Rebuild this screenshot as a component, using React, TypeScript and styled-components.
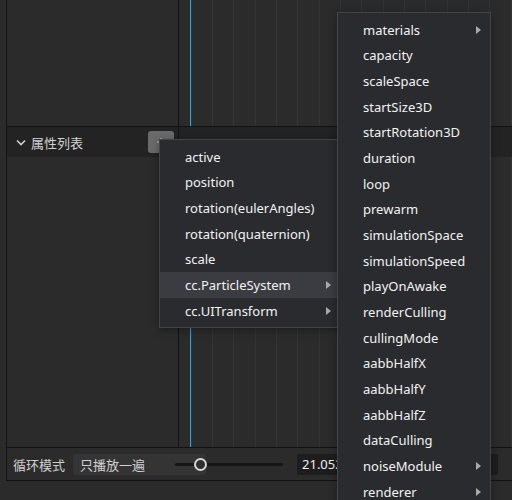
import React from "react";
import styled, { createGlobalStyle } from "styled-components";

const Global = createGlobalStyle`
  html, body { margin: 0; padding: 0; background: #2b2b2b; }
  body {
    font-family: "Noto Sans", "Noto Sans CJK SC", sans-serif;
    font-size: 13px;
    -webkit-font-smoothing: antialiased;
  }
  * { box-sizing: border-box; }
`;

const Page = styled.div`
  position: relative;
  width: 512px;
  height: 500px;
  overflow: hidden;
  background: #2b2b2b;
  padding-left: 6px;
`;

const Frame = styled.div`
  height: 481px;
  border-left: 1px solid #121212;
  border-bottom: 1px solid #121212;
  display: flex;
  flex-direction: column;
`;

const Panels = styled.div`
  display: grid;
  grid-template-columns: 171px 1fr;
  grid-template-rows: 126px 320px;
  gap: 1px;
  background: #121212;
  border-bottom: 1px solid #121212;
`;

const Cell = styled.div`
  background: #2b2b2b;
  display: flex;
  flex-direction: column;
  min-width: 0;
`;

const Timeline = styled.div`
  flex: 1;
  background-color: #2b2b2b;
  background-image:
    linear-gradient(#2aa8dc, #2aa8dc),
    repeating-linear-gradient(
      to right,
      transparent 0 11.7px,
      #323338 11.7px 12.7px,
      transparent 12.7px 21.33px
    );
  background-size: 1px 100%, 100% 100%;
  background-position: 11px 0, 0 0;
  background-repeat: no-repeat, no-repeat;
`;

const HeaderStrip = styled.div`
  height: 30px;
  flex: none;
  background: #232323;
  display: flex;
  align-items: center;
  padding: 0 4px 0 9px;
  color: #d2d2d2;
`;

const Title = styled.span`
  font-family: "Noto Sans CJK SC", sans-serif;
  font-size: 13px;
  margin-left: 5px;
  flex: 1;
`;

const AddButton = styled.div`
  width: 26px;
  height: 22px;
  border-radius: 3px;
  background: #6a6a6a;
  display: flex;
  align-items: center;
  justify-content: center;
`;

const Toolbar = styled.div`
  flex: 1;
  display: flex;
  align-items: center;
  padding-left: 6px;
  background: #2b2b2b;
`;

const Label = styled.span`
  font-family: "Noto Sans CJK SC", sans-serif;
  color: #cfcfcf;
  font-size: 13px;
  margin-right: 8px;
`;

const Select = styled.div`
  width: 133px;
  height: 21px;
  border-radius: 2px;
  background: #343434;
  color: #d0d0d0;
  font-family: "Noto Sans CJK SC", sans-serif;
  font-size: 13px;
  display: flex;
  align-items: center;
  padding-left: 7px;
`;

const Slider = styled.div`
  position: relative;
  width: 108px;
  height: 14px;
  margin-left: -31px;
  display: flex;
  align-items: center;
`;

const Track = styled.div`
  width: 100%;
  height: 3px;
  border-radius: 2px;
  background: #151515;
`;

const Thumb = styled.div`
  position: absolute;
  top: 50%;
  width: 13px;
  height: 13px;
  margin-top: -6.5px;
  margin-left: -6.5px;
  border-radius: 50%;
  border: 2px solid #d6d6d6;
  background: #2e2e2e;
`;

const NumberBox = styled.div`
  width: 201px;
  height: 21px;
  margin-left: 14px;
  border-radius: 2px;
  background: #1d1d1d;
  color: #efefef;
  font-size: 13px;
  display: flex;
  align-items: center;
  padding-left: 5px;
`;

const Menu = styled.div<{ $left: number; $top: number; $width: number; $z: number }>`
  position: absolute;
  left: ${(p) => p.$left}px;
  top: ${(p) => p.$top}px;
  width: ${(p) => p.$width}px;
  z-index: ${(p) => p.$z};
  background: #2a2b2f;
  border: 1px solid #43444a;
  padding: 4px 0 3px;
  box-shadow: 0 2px 8px rgba(0, 0, 0, 0.35);
`;

const Item = styled.div<{ $active?: boolean }>`
  height: 25.67px;
  display: flex;
  align-items: center;
  justify-content: space-between;
  padding: 0 9px 0 25px;
  color: #f2f2f2;
  font-size: 13px;
  white-space: nowrap;
  background: ${(p) => (p.$active ? "#3b3c41" : "transparent")};
`;

const Arrow = styled.span`
  width: 0;
  height: 0;
  border-left: 5px solid #a9a9a9;
  border-top: 4px solid transparent;
  border-bottom: 4px solid transparent;
`;

type Entry = { label: string; sub?: boolean; active?: boolean };

const firstMenu: Entry[] = [
  { label: "active" },
  { label: "position" },
  { label: "rotation(eulerAngles)" },
  { label: "rotation(quaternion)" },
  { label: "scale" },
  { label: "cc.ParticleSystem", sub: true, active: true },
  { label: "cc.UITransform", sub: true },
];

const secondMenu: Entry[] = [
  { label: "materials", sub: true },
  { label: "capacity" },
  { label: "scaleSpace" },
  { label: "startSize3D" },
  { label: "startRotation3D" },
  { label: "duration" },
  { label: "loop" },
  { label: "prewarm" },
  { label: "simulationSpace" },
  { label: "simulationSpeed" },
  { label: "playOnAwake" },
  { label: "renderCulling" },
  { label: "cullingMode" },
  { label: "aabbHalfX" },
  { label: "aabbHalfY" },
  { label: "aabbHalfZ" },
  { label: "dataCulling" },
  { label: "noiseModule", sub: true },
  { label: "renderer", sub: true },
];

const MenuList = ({ items }: { items: Entry[] }) => (
  <>
    {items.map((it) => (
      <Item key={it.label} $active={it.active}>
        <span>{it.label}</span>
        {it.sub && <Arrow />}
      </Item>
    ))}
  </>
);

export default function App() {
  return (
    <>
      <Global />
      <Page>
        <Frame>
          <Panels>
            <Cell />
            <Cell>
              <Timeline />
            </Cell>
            <Cell>
              <HeaderStrip>
                <svg width="10" height="7" viewBox="0 0 10 7">
                  <polyline points="1,1.5 5,5.5 9,1.5" fill="none" stroke="#cfcfcf" strokeWidth="1.6" />
                </svg>
                <Title>属性列表</Title>
                <AddButton>
                  <svg width="10" height="10" viewBox="0 0 10 10">
                    <path d="M5 1v8M1 5h8" stroke="#a8a8a8" strokeWidth="1.4" />
                  </svg>
                </AddButton>
              </HeaderStrip>
            </Cell>
            <Cell>
              <HeaderStrip />
              <Timeline />
            </Cell>
          </Panels>
          <Toolbar>
            <Label>循环模式</Label>
            <Select>只播放一遍</Select>
            <Slider>
              <Track />
              <Thumb style={{ left: "25px" }} />
            </Slider>
            <NumberBox>21.052</NumberBox>
          </Toolbar>
        </Frame>
        <Menu $left={159} $top={139} $width={182} $z={2}>
          <MenuList items={firstMenu} />
        </Menu>
        <Menu $left={337} $top={12} $width={154} $z={3}>
          <MenuList items={secondMenu} />
        </Menu>
      </Page>
    </>
  );
}
